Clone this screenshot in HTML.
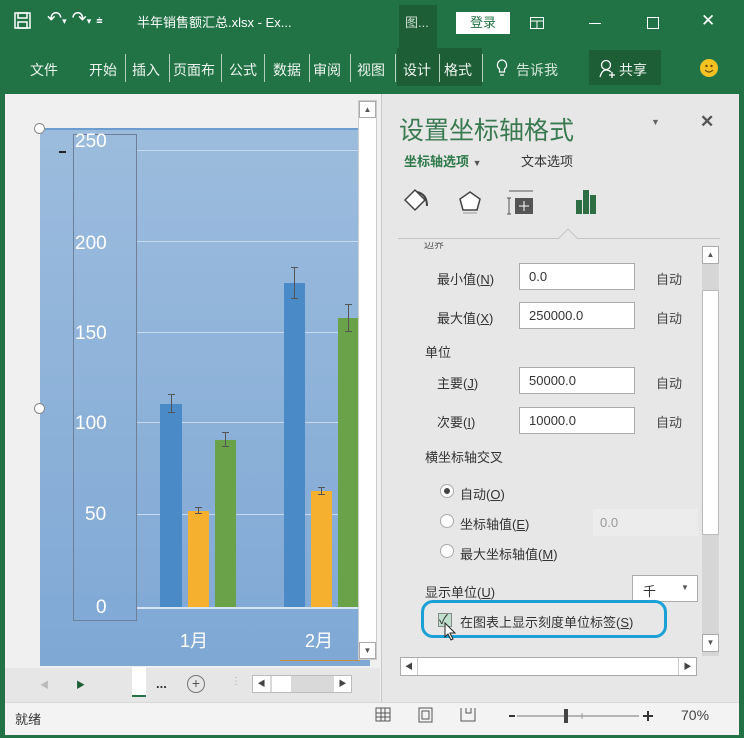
<!DOCTYPE html>
<html><head><meta charset="utf-8"><style>
*{margin:0;padding:0;box-sizing:border-box}
body{width:744px;height:738px;overflow:hidden;background:#217346;font-family:"Liberation Sans","Noto Sans CJK SC",sans-serif;position:relative}
.a{position:absolute}
.t{color:#fff;font-size:13px;white-space:nowrap}
.r{position:absolute;top:60px;color:#eef5f0;font-size:14px;white-space:nowrap}
.sep{position:absolute;top:54px;width:1px;height:28px;background:#b5d0bf}
.lbl{font-size:13px;color:#333;white-space:nowrap}
.inp{background:#fff;border:1px solid #ababab;font-size:13px;color:#333;padding:5px 0 0 9px}
.auto{font-size:13px;color:#444}
.yl{color:#fff;font-size:19px}
.grid{position:absolute;left:137px;width:233px;height:1px;background:#c9d9ec}
.err{position:absolute;width:1px;background:#555}
.err:before,.err:after{content:"";position:absolute;left:-3px;width:7px;height:1px;background:#555}
.err:before{top:0}.err:after{bottom:0}
.rad{position:absolute;width:14px;height:14px;border-radius:50%;background:#fff;border:1px solid #aaa}
</style></head><body>
<svg class="a" style="left:14px;top:12px" width="18" height="18"><rect x="1" y="1" width="15" height="15" fill="none" stroke="#fff" stroke-width="1.5"/><rect x="4" y="1" width="9" height="5" fill="none" stroke="#fff" stroke-width="1.5"/><rect x="4" y="10" width="9" height="6" fill="none" stroke="#fff" stroke-width="1.5"/></svg>
<div class="a t" style="left:47px;top:8px;font-size:18px">↶<span style="font-size:9px">▾</span> ↷<span style="font-size:9px">▾</span> <span style="font-size:11px">⩧</span></div>
<div class="a t" style="left:137px;top:12px">半年销售额汇总.xlsx - Ex...</div>
<div class="a" style="left:399px;top:5px;width:38px;height:43px;background:#1e5e36"></div>
<div class="a t" style="left:405px;top:12px;color:#cfe0d4">图...</div>
<div class="a" style="left:456px;top:12px;width:54px;height:22px;background:#fff;color:#217346;font-size:13px;text-align:center;line-height:22px">登录</div>
<svg class="a" style="left:530px;top:17px" width="14" height="12"><rect x=".5" y=".5" width="13" height="11" fill="none" stroke="#fff"/><line x1="1" y1="4" x2="13" y2="4" stroke="#fff"/><line x1="7" y1="4" x2="7" y2="11" stroke="#fff"/></svg>
<div class="a" style="left:589px;top:23px;width:12px;height:1px;background:#fff"></div>
<div class="a" style="left:647px;top:17px;width:12px;height:12px;border:1px solid #fff"></div>
<div class="a t" style="left:701px;top:11px;font-size:17px">✕</div>
<!-- ribbon -->
<div class="a" style="left:397px;top:48px;width:85px;height:38px;background:#1e5e36"></div>
<div class="a" style="left:589px;top:50px;width:72px;height:35px;background:#1e5e36"></div>
<div class="r" style="left:30px">文件</div>
<div class="r" style="left:89px">开始</div><div class="sep" style="left:125px"></div>
<div class="r" style="left:132px">插入</div><div class="sep" style="left:169px"></div>
<div class="r" style="left:173px;width:47px;overflow:hidden">页面布</div><div class="sep" style="left:221px"></div>
<div class="r" style="left:229px">公式</div><div class="sep" style="left:264px"></div>
<div class="r" style="left:273px">数据</div><div class="sep" style="left:309px"></div>
<div class="r" style="left:313px">审阅</div><div class="sep" style="left:350px"></div>
<div class="r" style="left:357px">视图</div><div class="sep" style="left:395px"></div>
<div class="r" style="left:403px">设计</div><div class="sep" style="left:439px"></div>
<div class="r" style="left:444px">格式</div><div class="sep" style="left:482px"></div>
<svg class="a" style="left:495px;top:59px" width="14" height="20"><path d="M7 1 A5 5 0 0 1 9.5 10 L9.5 13 L4.5 13 L4.5 10 A5 5 0 0 1 7 1 Z M5 16 H9" fill="none" stroke="#fff" stroke-width="1.2"/></svg>
<div class="r" style="left:516px;color:#d5e6da">告诉我</div>
<svg class="a" style="left:599px;top:59px" width="18" height="20"><circle cx="7" cy="6" r="4.5" fill="none" stroke="#fff" stroke-width="1.3"/><path d="M1 18 Q3 11 7 11 Q10 11 12 13 M10 16 H16 M13 13 V19" fill="none" stroke="#fff" stroke-width="1.3"/></svg>
<div class="r" style="left:619px">共享</div>
<div class="a" style="left:700px;top:59px;width:18px;height:18px;border-radius:50%;background:#f4c223"></div>
<svg class="a" style="left:700px;top:59px" width="18" height="18"><circle cx="6.5" cy="7" r="1.2" fill="#6b4a00"/><circle cx="11.5" cy="7" r="1.2" fill="#6b4a00"/><path d="M5 11 Q9 15 13 11" fill="none" stroke="#6b4a00" stroke-width="1.2"/></svg>
<!-- main area -->
<div class="a" style="left:5px;top:94px;width:734px;height:608px;background:#f0f0f0"></div>
<!-- chart -->
<div class="a" style="left:40px;top:128px;width:330px;height:538px;background:linear-gradient(#9cbcdd,#7fa8d5);border-top:2px solid #6d9ccf"></div>
<div class="grid" style="top:150px"></div><div class="grid" style="top:241px"></div><div class="grid" style="top:332px"></div><div class="grid" style="top:422px"></div><div class="grid" style="top:514px"></div>
<div class="a" style="left:137px;top:607px;width:233px;height:2px;background:#d8e4f2"></div>
<div class="a" style="left:73px;top:134px;width:64px;height:487px;border:1px solid #6f7f95"></div>
<div class="a" style="left:59px;top:151px;width:7px;height:2px;background:#222"></div>
<div class="a" style="left:34px;top:123px;width:11px;height:11px;border-radius:50%;background:#fff;border:1px solid #888"></div>
<div class="a" style="left:34px;top:403px;width:11px;height:11px;border-radius:50%;background:#fff;border:1px solid #888"></div>
<div class="a yl" style="left:75px;top:131px">250</div>
<div class="a yl" style="left:75px;top:233px">200</div>
<div class="a yl" style="left:75px;top:323px">150</div>
<div class="a yl" style="left:75px;top:413px">100</div>
<div class="a yl" style="left:85px;top:504px">50</div>
<div class="a yl" style="left:96px;top:597px">0</div>
<div class="a yl" style="left:180px;top:627px;font-size:18px">1月</div>
<div class="a yl" style="left:305px;top:627px;font-size:18px">2月</div>
<div class="a" style="left:160px;top:404px;width:22px;height:203px;background:#4a8ac6"></div>
<div class="a" style="left:188px;top:511px;width:21px;height:96px;background:#f5b030"></div>
<div class="a" style="left:215px;top:440px;width:21px;height:167px;background:#6aa24a"></div>
<div class="a" style="left:284px;top:283px;width:21px;height:324px;background:#4a8ac6"></div>
<div class="a" style="left:311px;top:491px;width:21px;height:116px;background:#f5b030"></div>
<div class="a" style="left:338px;top:318px;width:20px;height:289px;background:#6aa24a"></div>
<div class="err" style="left:171px;top:394px;height:19px"></div>
<div class="err" style="left:198px;top:507px;height:7px"></div>
<div class="err" style="left:225px;top:432px;height:15px"></div>
<div class="err" style="left:294px;top:267px;height:32px"></div>
<div class="err" style="left:321px;top:487px;height:8px"></div>
<div class="err" style="left:348px;top:304px;height:28px"></div>
<div class="a" style="left:280px;top:660px;width:80px;height:1px;background:#c49040"></div>
<!-- chart v scroll -->
<div class="a" style="left:358px;top:100px;width:19px;height:560px;background:#fff;border:1px solid #ccc"></div>
<div class="a" style="left:359px;top:101px;width:17px;height:17px;border:1px solid #aaa;font-size:8px;text-align:center;line-height:16px;color:#555">▲</div>
<div class="a" style="left:359px;top:642px;width:17px;height:17px;border:1px solid #aaa;font-size:8px;text-align:center;line-height:16px;color:#555;background:#fff">▼</div>
<!-- sheet bar -->
<div class="a" style="left:5px;top:668px;width:375px;height:34px;background:#e6e6e6"></div>
<div class="a" style="left:40px;top:678px;font-size:9px;color:#bbb">◀</div>
<div class="a" style="left:76px;top:678px;font-size:9px;color:#1e5e36">▶</div>
<div class="a" style="left:132px;top:667px;width:14px;height:30px;background:#fff;border-bottom:2px solid #217346"></div>
<div class="a" style="left:156px;top:676px;font-size:13px;color:#333;font-weight:bold">...</div>
<div class="a" style="left:187px;top:675px;width:18px;height:18px;border-radius:50%;border:1.5px solid #777;font-size:14px;line-height:15px;text-align:center;color:#555">+</div>
<div class="a" style="left:231px;top:676px;font-size:10px;color:#aaa">⋮</div>
<div class="a" style="left:252px;top:675px;width:100px;height:18px;background:#d9d9d9;border:1px solid #bbb"></div>
<div class="a" style="left:253px;top:676px;width:17px;height:16px;background:#fff;font-size:8px;line-height:16px;text-align:center;color:#444">◀</div>
<div class="a" style="left:272px;top:676px;width:19px;height:16px;background:#fff"></div>
<div class="a" style="left:334px;top:676px;width:17px;height:16px;background:#fff;font-size:8px;line-height:16px;text-align:center;color:#444">▶</div>
<!-- panel -->
<div class="a" style="left:381px;top:94px;width:1px;height:608px;background:#c8c8c8"></div>
<div class="a" style="left:382px;top:94px;width:357px;height:608px;background:#e7e7e7"></div>
<div class="a" style="left:399px;top:111px;font-size:25px;color:#3a7a50;font-family:'Noto Sans CJK SC',sans-serif">设置坐标轴格式</div>
<div class="a" style="left:651px;top:117px;font-size:9px;color:#666">▼</div>
<div class="a" style="left:700px;top:112px;font-size:17px;color:#555;font-weight:bold">✕</div>
<div class="a" style="left:404px;top:151px;font-size:13px;color:#2e7a4a;font-weight:bold">坐标轴选项 <span style="font-size:9px;color:#555">▼</span></div>
<div class="a lbl" style="left:521px;top:151px">文本选项</div>
<svg class="a" style="left:403px;top:186px" width="200" height="32">
<path d="M2 14 L12 4 L22 14 L12 24 Z" fill="#fff" stroke="#444" stroke-width="1.5"/><path d="M14 6 Q24 8 24 20" fill="none" stroke="#444" stroke-width="2"/>
<path d="M67 6 L77 13 L74 24 L60 24 L57 13 Z" fill="#fff" stroke="#444" stroke-width="1.5"/><path d="M60 27 L74 27" stroke="#999"/>
<rect x="112" y="12" width="18" height="16" fill="#555"/><path d="M106 5 L130 5 M106 12 L106 28 M104 12 L108 12 M104 28 L108 28" stroke="#555"/><path d="M121 15 L121 25 M116 20 L126 20" stroke="#fff"/>
<rect x="173" y="14" width="6" height="14" fill="#2e6e45"/><rect x="180" y="4" width="6" height="24" fill="#2e6e45"/><rect x="187" y="9" width="6" height="19" fill="#2e6e45"/>
</svg>
<div class="a" style="left:398px;top:238px;width:322px;height:1px;background:#c5c5c5"></div>
<svg class="a" style="left:558px;top:228px" width="22" height="12"><path d="M0 11 L10 1 L20 11" fill="#e7e7e7" stroke="#c5c5c5"/></svg>
<div class="a" style="left:424px;top:242px;font-size:10px;color:#555;height:8px;overflow:hidden;line-height:8px">边界</div>
<!-- v scroll panel -->
<div class="a" style="left:702px;top:246px;width:17px;height:410px;background:#d6d6d6"></div>
<div class="a" style="left:702px;top:246px;width:17px;height:18px;background:#fff;border:1px solid #aaa;font-size:8px;text-align:center;line-height:16px;color:#555">▲</div>
<div class="a" style="left:702px;top:290px;width:17px;height:245px;background:#fff;border:1px solid #bbb"></div>
<div class="a" style="left:702px;top:634px;width:17px;height:18px;background:#fff;border:1px solid #aaa;font-size:8px;text-align:center;line-height:16px;color:#555">▼</div>
<div class="a lbl" style="left:437px;top:269px">最小值(<u>N</u>)</div>
<div class="a inp" style="left:519px;top:263px;width:116px;height:27px">0.0</div>
<div class="a auto" style="left:656px;top:269px">自动</div>
<div class="a lbl" style="left:437px;top:308px">最大值(<u>X</u>)</div>
<div class="a inp" style="left:519px;top:302px;width:116px;height:27px">250000.0</div>
<div class="a auto" style="left:656px;top:308px">自动</div>
<div class="a lbl" style="left:425px;top:342px">单位</div>
<div class="a lbl" style="left:437px;top:373px">主要(<u>J</u>)</div>
<div class="a inp" style="left:519px;top:367px;width:116px;height:27px">50000.0</div>
<div class="a auto" style="left:656px;top:373px">自动</div>
<div class="a lbl" style="left:437px;top:412px">次要(<u>I</u>)</div>
<div class="a inp" style="left:519px;top:407px;width:116px;height:27px">10000.0</div>
<div class="a auto" style="left:656px;top:412px">自动</div>
<div class="a lbl" style="left:425px;top:447px">横坐标轴交叉</div>
<div class="rad" style="left:440px;top:484px"><div style="width:6px;height:6px;border-radius:50%;background:#444;margin:3px"></div></div>
<div class="a lbl" style="left:460px;top:484px">自动(<u>O</u>)</div>
<div class="rad" style="left:440px;top:514px"></div>
<div class="a lbl" style="left:460px;top:514px">坐标轴值(<u>E</u>)</div>
<div class="a" style="left:593px;top:509px;width:105px;height:27px;background:#ececec;font-size:13px;color:#999;padding:6px 0 0 7px">0.0</div>
<div class="rad" style="left:440px;top:544px"></div>
<div class="a lbl" style="left:460px;top:544px">最大坐标轴值(<u>M</u>)</div>
<div class="a lbl" style="left:425px;top:582px">显示单位(<u>U</u>)</div>
<div class="a" style="left:632px;top:575px;width:66px;height:27px;background:#fff;border:1px solid #ababab;font-size:13px;color:#333;padding:5px 0 0 10px">千<span style="position:absolute;left:48px;top:7px;font-size:8px;color:#555">▼</span></div>
<div class="a" style="left:421px;top:600px;width:246px;height:38px;border:3px solid #1ba1d6;border-radius:12px"></div>
<div class="a" style="left:438px;top:613px;width:14px;height:14px;background:#bfe0cc;border:1px solid #888;font-size:13px;line-height:12px;color:#333">✓</div>
<div class="a lbl" style="left:460px;top:612px">在图表上显示刻度单位标签(<u>S</u>)</div>
<svg class="a" style="left:444px;top:622px" width="14" height="20"><path d="M1 1 L1 15 L4 12 L7 18 L9 17 L6 11 L11 11 Z" fill="#fff" stroke="#222"/></svg>
<div class="a" style="left:400px;top:657px;width:297px;height:19px;background:#fff;border:1px solid #aaa"></div>
<div class="a" style="left:401px;top:658px;width:17px;height:17px;border-right:1px solid #ccc;font-size:8px;text-align:center;line-height:17px;color:#444">◀</div>
<div class="a" style="left:678px;top:658px;width:18px;height:17px;border-left:1px solid #ccc;font-size:8px;text-align:center;line-height:17px;color:#444">▶</div>
<!-- status bar -->
<div class="a" style="left:5px;top:702px;width:734px;height:33px;background:#f3f3f3;border-top:1px solid #d8d8d8"></div>
<div class="a lbl" style="left:15px;top:709px">就绪</div>
<svg class="a" style="left:375px;top:706px" width="340" height="20">
<rect x="1" y="2" width="14" height="13" fill="none" stroke="#555"/><path d="M1 7H15M1 11H15M6 2V15M10 2V15" stroke="#555"/>
<rect x="44" y="2" width="13" height="14" fill="none" stroke="#555"/><rect x="47" y="5" width="7" height="8" fill="none" stroke="#555"/>
<path d="M86 2V15H100V2M91 2V7H96V2" fill="none" stroke="#555"/>
<path d="M134 10H140" stroke="#333" stroke-width="2"/><path d="M142 10H264" stroke="#777"/><rect x="189" y="3" width="4" height="14" fill="#444"/><path d="M207 7V13" stroke="#999"/><path d="M268 10H278M273 5V15" stroke="#333" stroke-width="2"/>
</svg>
<div class="a lbl" style="left:681px;top:707px;font-size:14px;color:#444">70%</div>
</body></html>
